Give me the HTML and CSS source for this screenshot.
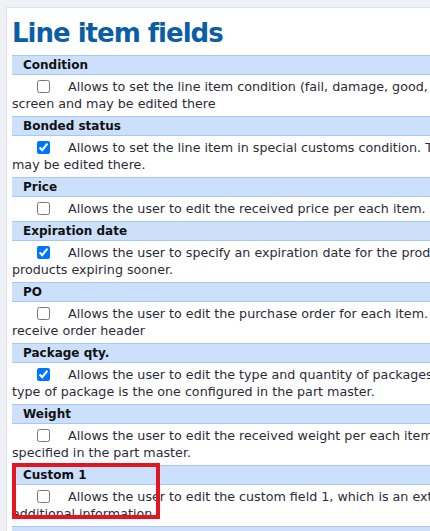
FILE: index.html
```html
<!DOCTYPE html>
<html lang="en">
<head>
  <meta charset="UTF-8" />
  <title>Line item fields</title>
  <link rel="stylesheet" href="styles.css">
</head>
<body>
  <div class="page">
    <h1>Line item fields</h1>

    <div class="field">
      <div class="field-name">Condition</div>
      <div class="field-desc"><input type="checkbox" />Allows to set the line item condition (fail, damage, good, etc.). The condition is shown on the receive<br>screen and may be edited there</div>
    </div>

    <div class="field">
      <div class="field-name">Bonded status</div>
      <div class="field-desc"><input type="checkbox" checked />Allows to set the line item in special customs condition. The bonded status is shown on the receive screen and<br>may be edited there.</div>
    </div>

    <div class="field">
      <div class="field-name">Price</div>
      <div class="field-desc"><input type="checkbox" />Allows the user to edit the received price per each item.</div>
    </div>

    <div class="field">
      <div class="field-name">Expiration date</div>
      <div class="field-desc"><input type="checkbox" checked />Allows the user to specify an expiration date for the products received, so the picking can prioritize the<br>products expiring sooner.</div>
    </div>

    <div class="field">
      <div class="field-name">PO</div>
      <div class="field-desc"><input type="checkbox" />Allows the user to edit the purchase order for each item. By default the PO is the one specified in the<br>receive order header</div>
    </div>

    <div class="field">
      <div class="field-name">Package qty.</div>
      <div class="field-desc"><input type="checkbox" checked />Allows the user to edit the type and quantity of packages received for each item. By default the<br>type of package is the one configured in the part master.</div>
    </div>

    <div class="field">
      <div class="field-name">Weight</div>
      <div class="field-desc"><input type="checkbox" />Allows the user to edit the received weight per each item. By default the weight is the one<br>specified in the part master.</div>
    </div>

    <div class="field">
      <div class="field-name">Custom 1</div>
      <div class="field-desc"><input type="checkbox" />Allows the user to edit the custom field 1, which is an extra field that can be used to store<br>additional information.</div>
      <div class="mark"></div>
    </div>

    <div class="field">
      <div class="field-name">Custom 2</div>
      <div class="field-desc"><input type="checkbox" />Allows the user to edit the custom field 2.</div>
    </div>
  </div>
</body>
</html>
```

FILE: styles.css
```css
:root {
  --title: #0b5ea6;
  --head-bg: #cce0fb;
  --head-line: #a6c8f3;
  --text: #2b2b38;
}

html {
  overflow: hidden;
}

body {
  margin: 0;
  padding: 7px 0 0 6px;
  background: #eef2f6;
  font-family: "DejaVu Sans", Verdana, sans-serif;
  color: var(--text);
}

.page {
  width: 860px;
  background: #fff;
  border: 1px solid #dfe3e8;
  padding: 0 5px 20px;
}

h1 {
  margin: 0;
  padding: 9px 0 6px;
  font-size: 26px;
  line-height: 32px;
  letter-spacing: -1px;
  color: var(--title);
}

.field {
  position: relative;
}

.field-name {
  background: var(--head-bg);
  border-top: 1px solid var(--head-line);
  border-bottom: 1px solid var(--head-line);
  padding: 0 11px;
  font-size: 12px;
  font-weight: bold;
  line-height: 18px;
  color: #111;
}

.field-desc {
  padding: 3px 0 4px;
  font-size: 12.7px;
  line-height: 17px;
  text-indent: 25px;
}

.field-desc input {
  width: 13px;
  height: 13px;
  margin: 0 18px 0 0;
  vertical-align: -2px;
}

/* red highlight drawn over the Custom 1 block */
.mark {
  position: absolute;
  left: 0;
  top: -2px;
  width: 140px;
  height: 48px;
  border: 4px solid #e3161f;
}
```
